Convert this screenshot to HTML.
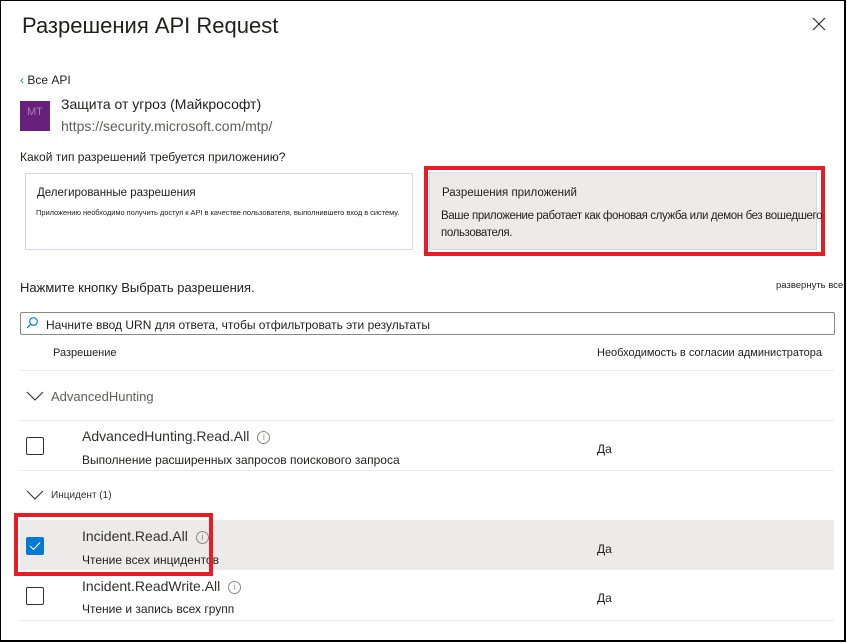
<!DOCTYPE html>
<html><head><meta charset="utf-8"><style>
*{margin:0;padding:0;box-sizing:border-box}
body{width:847px;height:643px;position:relative;overflow:hidden;background:#fff;font-family:"Liberation Sans","DejaVu Sans",sans-serif;color:#201f1e}
.frame{position:absolute;left:0;top:0;width:846px;height:642px;border:1px solid #000;border-right-width:2px;border-bottom-width:2px}
.a{position:absolute;white-space:nowrap}
.line{position:absolute;left:20px;width:814px;height:1px;background:#edebe9}
.cb{position:absolute;width:18px;height:18px;border:1px solid #323130;border-radius:2px;background:#fff}
.info{display:inline-block;width:13px;height:13px;border:1px solid #8a8886;border-radius:50%;font-size:9px;line-height:11px;text-align:center;color:#8a8886;margin-left:8px;vertical-align:1px}
</style></head><body>
<div class="frame"></div>
<div class="a" style="left:22px;top:13px;font-size:22px;color:#201f1e">Разрешения API Request</div>
<svg class="a" style="left:812px;top:17px" width="14" height="14"><path d="M1 1L13 13M13 1L1 13" stroke="#323130" stroke-width="1.2"/></svg>
<div class="a" style="left:20px;top:73px;font-size:12px"><span style="color:#0078d4">‹</span> Все API</div>
<div class="a" style="left:20px;top:101px;width:30px;height:30px;background:#68217a;color:#a77fb3;font-size:11px;padding:5px 0 0 7px">MT</div>
<div class="a" style="left:61px;top:96px;font-size:14px">Защита от угроз (Майкрософт)</div>
<div class="a" style="left:61px;top:118px;font-size:14px;color:#605e5c">https://security.microsoft.com/mtp/</div>
<div class="a" style="left:20px;top:150px;font-size:12px">Какой тип разрешений требуется приложению?</div>
<div class="a" style="left:25px;top:173px;width:388px;height:77px;border:1px solid #d2d6ea"></div>
<div class="a" style="left:37px;top:187px;font-size:11.5px">Делегированные разрешения</div>
<div class="a" style="left:36px;top:208px;font-size:7.5px;letter-spacing:-0.05px">Приложению необходимо получить доступ к API в качестве пользователя, выполнившего вход в систему.</div>
<div class="a" style="left:429px;top:172px;width:388px;height:78px;background:#edebe9;border:1px solid #d2d6ea"></div>
<div class="a" style="left:424px;top:166px;width:401px;height:90px;border:4px solid #e81c24"></div>
<div class="a" style="left:442px;top:187px;font-size:11.5px">Разрешения приложений</div>
<div class="a" style="left:441px;top:208px;font-size:11.5px;line-height:17px;letter-spacing:-0.38px">Ваше приложение работает как фоновая служба или демон без вошедшего<br>пользователя.</div>
<div class="a" style="left:20px;top:280px;font-size:13px">Нажмите кнопку Выбрать разрешения.</div>
<div class="a" style="left:776px;top:280px;font-size:9.5px">развернуть все</div>
<div class="a" style="left:20px;top:312px;width:815px;height:23px;border:1px solid #8a8886;border-radius:2px"></div>
<svg class="a" style="left:26px;top:317px" width="12" height="12"><circle cx="7.5" cy="4.5" r="3.8" fill="none" stroke="#0078d4" stroke-width="1.1"/><path d="M5 7L1 11" stroke="#0078d4" stroke-width="1.2"/></svg>
<div class="a" style="left:46px;top:318px;font-size:12px">Начните ввод URN для ответа, чтобы отфильтровать эти результаты</div>
<div class="a" style="left:53px;top:347px;font-size:11px">Разрешение</div>
<div class="a" style="left:597px;top:347px;font-size:11px">Необходимость в согласии администратора</div>
<div class="line" style="top:370px"></div>
<svg class="a" style="left:26px;top:391px" width="18" height="10"><path d="M1 1L9 9L17 1" stroke="#323130" stroke-width="1.1" fill="none"/></svg>
<div class="a" style="left:51px;top:389px;font-size:13px;color:#605e5c">AdvancedHunting</div>
<div class="line" style="top:420px"></div>
<div class="cb" style="left:26px;top:437px"></div>
<div class="a" style="left:82px;top:428px;font-size:14px;color:#323130">AdvancedHunting.Read.All<span class="info">i</span></div>
<div class="a" style="left:82px;top:453px;font-size:12px">Выполнение расширенных запросов поискового запроса</div>
<div class="a" style="left:597px;top:442px;font-size:12px">Да</div>
<div class="line" style="top:470px"></div>
<svg class="a" style="left:26px;top:490px" width="18" height="10"><path d="M1 1L9 9L17 1" stroke="#323130" stroke-width="1.1" fill="none"/></svg>
<div class="a" style="left:51px;top:490px;font-size:10px;color:#323130">Инцидент (1)</div>
<div class="a" style="left:20px;top:520px;width:814px;height:50px;background:#edebe9"></div>
<div class="cb" style="left:26px;top:537px;background:#0078d4;border-color:#0078d4"></div>
<svg class="a" style="left:29px;top:541px" width="12" height="10"><path d="M1 5L4.5 8.5L11 1.5" stroke="#fff" stroke-width="1.1" fill="none"/></svg>
<div class="a" style="left:82px;top:528px;font-size:14px;color:#323130">Incident.Read.All<span class="info">i</span></div>
<div class="a" style="left:82px;top:553px;font-size:12px">Чтение всех инцидентов</div>
<div class="a" style="left:597px;top:542px;font-size:12px">Да</div>
<div class="a" style="left:14px;top:513px;width:199px;height:63px;border:4px solid #e81c24"></div>
<div class="cb" style="left:26px;top:587px"></div>
<div class="a" style="left:82px;top:578px;font-size:14px;color:#323130">Incident.ReadWrite.All<span class="info">i</span></div>
<div class="a" style="left:82px;top:602px;font-size:12px">Чтение и запись всех групп</div>
<div class="a" style="left:597px;top:591px;font-size:12px">Да</div>
<div class="line" style="top:620px"></div>
</body></html>
